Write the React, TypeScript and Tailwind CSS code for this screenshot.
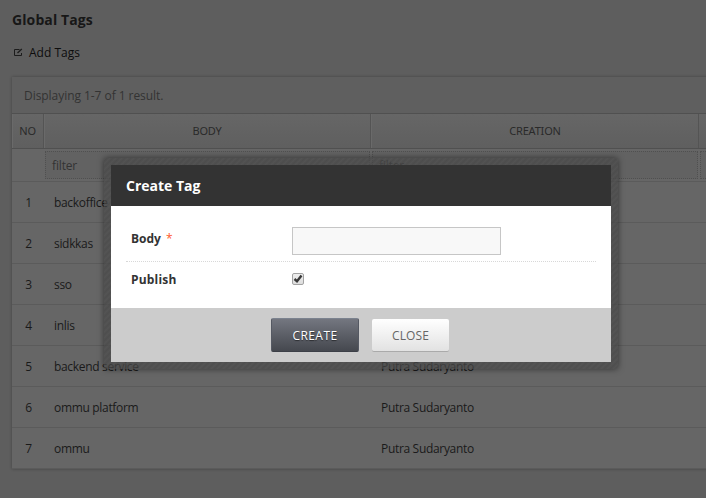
import React from "react";

const rows = ["backoffice", "sidkkas", "sso", "inlis", "backend service", "ommu platform", "ommu"];

function EditIcon() {
  return (
    <svg width="9" height="9" viewBox="0 0 9 9" fill="none" stroke="#1c1c1c">
      <path d="M5.5 1.5H.5V7.5H7.5V5" strokeWidth="1" />
      <path d="M3.5 5L7.8 1" strokeWidth="1.3" />
    </svg>
  );
}

function FilterBox() {
  return (
    <div className="h-7 w-full border border-dotted border-[#505050] bg-[#626262] pl-1.5 text-[12px] leading-[27px] tracking-[-0.15px] text-[#333]">
      filter
    </div>
  );
}

function HeadCell({ label, className }: { label: string; className: string }) {
  return (
    <div
      className={`flex shrink-0 items-center justify-center border-r border-[#545454] font-['Noto_Sans',sans-serif] text-[11px] tracking-[-0.2px] text-[#2a2a2a] shadow-[inset_1px_0_0_#6a6a6a] ${className}`}
    >
      {label}
    </div>
  );
}

function TagTable() {
  return (
    <div className="ml-3 mt-[15px] w-[740px] bg-[#666] shadow-[0_0_3px_rgba(0,0,0,0.3)]">
      <div className="h-[36px] bg-[#5f5f5f] pl-3 text-[12px] leading-[37px] tracking-[-0.05px] text-[#333]">
        Displaying 1-7 of 1 result.
      </div>
      <div className="flex h-[36px] border-y border-[#505050] bg-linear-to-b from-[#666] to-[#5f5f5f]">
        <HeadCell label="NO" className="w-8" />
        <HeadCell label="BODY" className="w-[327px]" />
        <HeadCell label="CREATION" className="w-[328px] pl-px" />
      </div>
      <div className="flex h-[33px] border-b border-[#5b5b5b] pt-[2px]">
        <div className="w-8 shrink-0" />
        <div className="w-[327px] shrink-0 px-px"><FilterBox /></div>
        <div className="w-[328px] shrink-0 px-px"><FilterBox /></div>
        <div className="w-[50px] shrink-0 px-px"><div className="h-7 border border-dotted border-[#505050] bg-[#626262]" /></div>
      </div>
      {rows.map((name, i) => (
        <div key={name} className="flex h-[41px] border-b border-[#5b5b5b] text-[12px] leading-[41px] tracking-[-0.32px] text-[#1a1a1a]">
          <div className="w-8 shrink-0 pl-px text-center">{i + 1}</div>
          <div className="w-[327px] shrink-0 pl-2.5">{name}</div>
          <div className="w-[328px] shrink-0 pl-2.5">Putra Sudaryanto</div>
        </div>
      ))}
    </div>
  );
}

function Modal() {
  return (
    <div className="absolute left-[104px] top-[158px] w-[514px] rounded-[3px] bg-[repeating-linear-gradient(135deg,rgba(76,76,76,0.7)_0px,rgba(68,68,68,0.7)_2.12px,rgba(76,76,76,0.7)_4.243px)] p-[7px] shadow-[0_0_6px_rgba(0,0,0,0.5)]">
      <div className="h-[41px] bg-[#333] pl-[15px] text-[14px] font-bold leading-[41px] text-white">Create Tag</div>
      <div className="h-[102px] bg-white px-[15px] pt-[16px] text-[12px] text-[#333]">
        <div className="flex h-[40px] border-b border-dotted border-[#d8d8d8] pl-[5px]">
          <div className="w-[161px] pt-[5px] font-bold leading-[24px]">
            Body <span className="ml-0.5 font-normal text-[#ff5a2a]">*</span>
          </div>
          <div className="mt-[5px] h-7 w-[209px] border border-[#c6c6c6] bg-[#f8f8f8]" />
        </div>
        <div className="flex pl-[5px] pt-[5px]">
          <div className="w-[161px] font-bold leading-[25px] tracking-[0.2px]">Publish</div>
          <div className="mt-1.5 h-3 w-3 rounded-[2px] border border-[#a2a2a2] bg-linear-to-b from-[#eee] to-[#ddd]">
            <svg width="10" height="10" viewBox="0 0 10 10" fill="none" stroke="#383838" strokeWidth="2.4">
              <path d="M1.5 5L4 7.3L8.5 1.6" />
            </svg>
          </div>
        </div>
      </div>
      <div className="flex h-[54px] gap-[13px] bg-[#ccc] pl-[160px] pt-2.5 text-[12px]">
        <div className="h-[34px] w-[88px] rounded-[2px] border border-[#555963] border-b-[#3c3f47] border-t-[#7b828e] bg-linear-to-b from-[#747780] to-[#45484f] text-center leading-[33px] tracking-[0.45px] text-white [text-shadow:0_1px_1px_rgba(0,0,0,0.5)]">
          CREATE
        </div>
        <div className="mt-px h-[32px] w-[77px] rounded-[2px] bg-linear-to-b from-white to-[#e2e2e2] text-center leading-[33px] tracking-[0.1px] text-[#666] shadow-[0_1px_0_#aaa]">
          CLOSE
        </div>
      </div>
    </div>
  );
}

export default function App() {
  return (
    <div className="relative h-[498px] w-[706px] overflow-hidden bg-[#5e5e5e] font-['Open_Sans','Noto_Sans',sans-serif]">
      <h1 className="pl-3 pt-[10px] text-[14px] font-bold leading-[20px] tracking-[0.1px] text-[#171717]">Global Tags</h1>
      <div className="mt-[13px] flex h-[19px] items-center gap-[6px] pl-[14px] text-[12px] text-[#0d0d0d]">
        <EditIcon />
        <span>Add Tags</span>
      </div>
      <TagTable />
      <Modal />
    </div>
  );
}
